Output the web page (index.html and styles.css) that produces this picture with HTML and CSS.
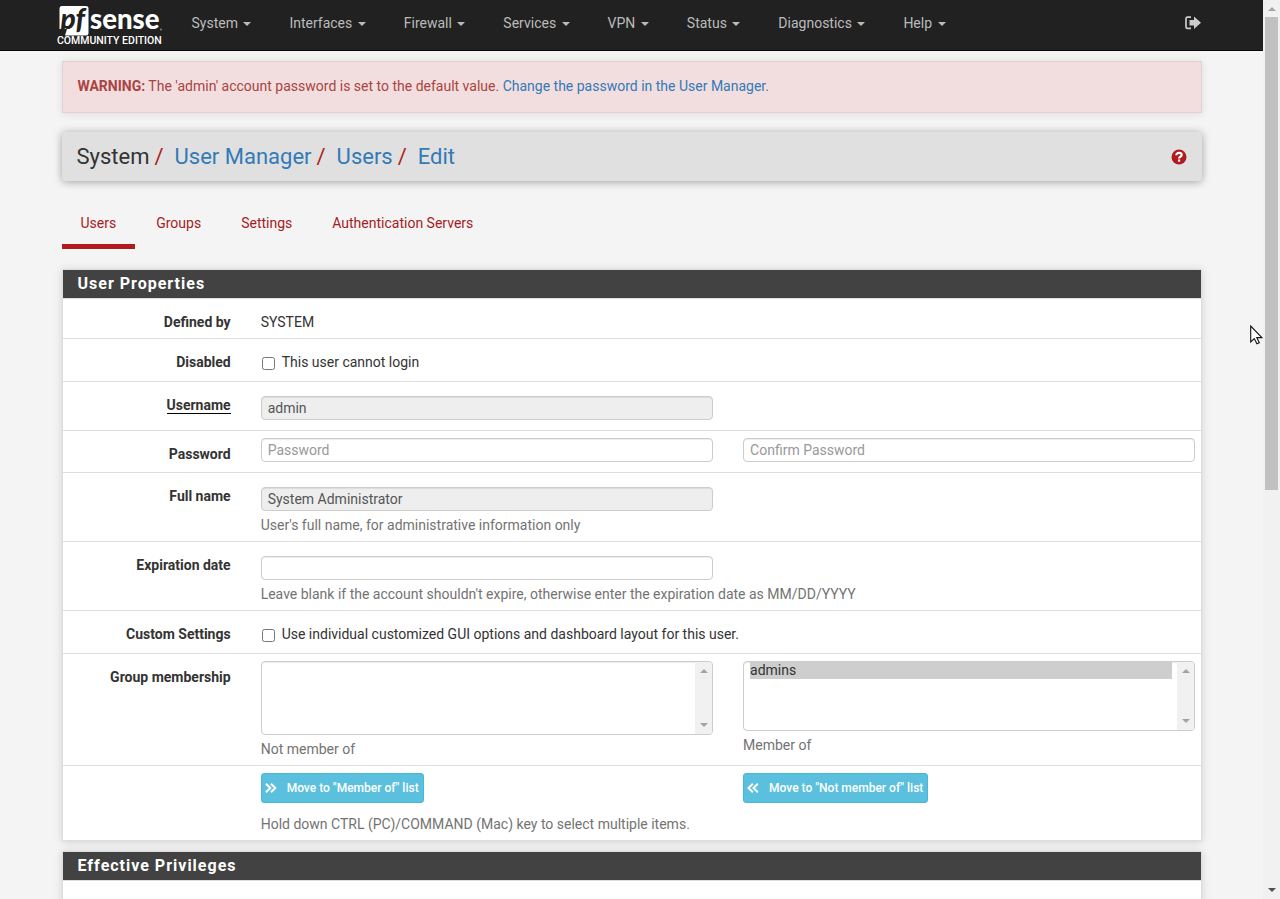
FILE: index.html
```html
<!DOCTYPE html>
<html lang="en">
<head>
<meta charset="utf-8">
<meta name="viewport" content="width=device-width, initial-scale=1">
<title>System: User Manager: Users: Edit</title>
<link rel="stylesheet" href="styles.css">
</head>
<body>
<header class="navbar">
  <div class="container navbar-inner">
    <a class="brand" href="#" aria-label="pfSense Community Edition">
      <svg class="brand-logo" viewBox="0 0 220 84" role="img" aria-hidden="true">
        <path class="logo-tile" d="M9 2h49q5 0 5 5v49q0 5-5 5H16l4-13H5V7q0-5 4-5z"/>
        <text class="logo-pf" x="7" y="48">pf</text>
        <text class="logo-sense" x="66" y="48">sense</text>
        <circle class="logo-dot" cx="208" cy="49" r="2"/>
        <text class="logo-sub" x="0" y="78">COMMUNITY EDITION</text>
      </svg>
    </a>
    <nav class="menu">
      <a href="#">System <span class="caret"></span></a>
      <a href="#">Interfaces <span class="caret"></span></a>
      <a href="#">Firewall <span class="caret"></span></a>
      <a href="#">Services <span class="caret"></span></a>
      <a href="#">VPN <span class="caret"></span></a>
      <a href="#">Status <span class="caret"></span></a>
      <a href="#">Diagnostics <span class="caret"></span></a>
      <a href="#">Help <span class="caret"></span></a>
    </nav>
    <a class="logout" href="#" aria-label="Logout">
      <svg width="17" height="14" viewBox="0 0 17 14"><path d="M6 1.200H2.500Q1 1.200 1 2.700v8.200Q1 12.400 2.500 12.400H6" fill="none" stroke="currentColor" stroke-width="1.700"/><path d="M4.500 4H9V.500L16 6.800 9 13.100V9.600H4.500z" fill="currentColor"/></svg>
    </a>
  </div>
</header>

<main class="container">
  <div class="alert"><strong>WARNING:</strong> The 'admin' account password is set to the default value. <a href="#">Change the password in the User Manager.</a></div>

  <div class="titlebar">
    <ol class="breadcrumb">
      <li>System</li>
      <li><a href="#">User Manager</a></li>
      <li><a href="#">Users</a></li>
      <li><a href="#">Edit</a></li>
    </ol>
    <a class="help-link" href="#" aria-label="Help">
      <svg width="16" height="16" viewBox="0 0 16 16"><circle cx="8" cy="8" r="7.500" fill="#b01c1e"/><path d="M5.300 6.300C5.300 4.700 6.400 3.900 8 3.900S10.700 4.800 10.700 6.100C10.700 7.600 8.100 7.700 8.100 9.400" fill="none" stroke="#fff" stroke-width="2.200"/><path d="M7 10.500h2.200v2.200H7z" fill="#fff"/></svg>
    </a>
  </div>

  <nav class="tabs">
    <a class="active" href="#">Users</a>
    <a href="#">Groups</a>
    <a href="#">Settings</a>
    <a href="#">Authentication Servers</a>
  </nav>

  <form class="form">
    <section class="panel">
      <h2 class="panel-heading">User Properties</h2>
      <div class="form-row">
        <span class="label">Defined by</span>
        <div class="field low">SYSTEM</div>
      </div>
      <div class="form-row">
        <span class="label">Disabled</span>
        <div class="field low wide check"><label><input type="checkbox"> This user cannot login</label></div>
      </div>
      <div class="form-row">
        <label class="label" for="username"><span class="required">Username</span></label>
        <div class="field inset"><input class="control" id="username" type="text" value="admin" readonly></div>
      </div>
      <div class="form-row">
        <label class="label" for="password">Password</label>
        <div class="field"><input class="control" id="password" type="password" placeholder="Password"></div>
        <div class="field"><input class="control" type="password" placeholder="Confirm Password" aria-label="Confirm Password"></div>
      </div>
      <div class="form-row">
        <label class="label" for="fullname">Full name</label>
        <div class="field inset"><input class="control" id="fullname" type="text" value="System Administrator" readonly><span class="hint">User's full name, for administrative information only</span></div>
      </div>
      <div class="form-row">
        <label class="label" for="expires">Expiration date</label>
        <div class="field inset wide"><input class="control half" id="expires" type="text"><span class="hint">Leave blank if the account shouldn't expire, otherwise enter the expiration date as MM/DD/YYYY</span></div>
      </div>
      <div class="form-row">
        <span class="label">Custom Settings</span>
        <div class="field low wide check"><label><input type="checkbox"> Use individual customized GUI options and dashboard layout for this user.</label></div>
      </div>
      <div class="form-row">
        <span class="label">Group membership</span>
        <div class="field">
          <div class="list">
            <select class="control listbox tall" id="notmember" multiple></select>
            <span class="list-scroll"><i class="arrow up"></i><i class="arrow down"></i></span>
          </div>
          <label class="hint" for="notmember">Not member of</label>
        </div>
        <div class="field">
          <div class="list">
            <select class="control listbox" id="member" multiple><option selected>admins</option></select>
            <span class="list-scroll"><i class="arrow up"></i><i class="arrow down"></i></span>
          </div>
          <label class="hint" for="member">Member of</label>
        </div>
      </div>
      <div class="form-row">
        <span class="label"></span>
        <div class="field">
          <button class="btn" type="button"><svg width="12" height="10" viewBox="0 0 12 10"><path d="M1 .700 5.300 5 1 9.300M6 .700 10.300 5 6 9.300"/></svg>Move to "Member of" list</button>
          <span class="hint after-button">Hold down CTRL (PC)/COMMAND (Mac) key to select multiple items.</span>
        </div>
        <div class="field">
          <button class="btn" type="button"><svg width="12" height="10" viewBox="0 0 12 10"><path d="M5.800 .700 1.500 5 5.800 9.300M10.800 .700 6.500 5 10.800 9.300"/></svg>Move to "Not member of" list</button>
        </div>
      </div>
    </section>

    <section class="panel">
      <h2 class="panel-heading">Effective Privileges</h2>
      <div class="panel-body"></div>
    </section>
  </form>
</main>

<div class="page-scroll"><i class="arrow up"></i><span class="thumb"></span><i class="arrow down dark"></i></div>
<svg class="pointer" width="13" height="20" viewBox="0 0 13 20"><path d="M.700 1v16l3.600-3.400 2.600 5.200 2.400-1.100-2.500-5.100h5.100z" fill="#fff" stroke="#111" stroke-width="1.100"/></svg>
</body>
</html>
```
FILE: styles.css
```css
* { box-sizing: border-box; }
html { height: 100%; overflow: hidden; }
body {
  margin: 0;
  height: 100%;
  padding-right: 17px;
  overflow: hidden;
  background: #f4f4f4;
  color: #333;
  font: 14px/20px Roboto, "Liberation Sans", sans-serif;
}
a { color: #337ab7; text-decoration: none; }
.container { max-width: 1170px; margin: 0 auto; padding: 0 15px; }

.navbar { background: #212121; border-bottom: 1px solid #080808; }
.navbar-inner { display: flex; height: 50px; }
.brand { margin-left: -5px; padding-top: 5px; width: 116px; }
.brand-logo { display: block; width: 110px; height: 42px; overflow: visible; }
.logo-tile { fill: #fff; }
.logo-pf { font: italic 900 56px Lato, sans-serif; fill: #212121; }
.logo-sense { font: 900 55px Lato, sans-serif; fill: #fff; }
.logo-dot { fill: #888; }
.logo-sub { font: 500 21px Roboto, sans-serif; fill: #fff; }
.menu { display: flex; flex: 1; }
.menu a { padding: 13px 19px 0; color: #bbb; white-space: nowrap; }
.caret {
  display: inline-block;
  margin-left: 2px;
  vertical-align: middle;
  border: 4px solid transparent;
  border-top-color: currentColor;
  border-bottom: 0;
}
.logout { padding-top: 16px; color: #ccc; }
.logout svg { display: block; }

.alert {
  margin: 10px 0 19px;
  padding: 14px 15px 16px;
  border: 1px solid #e6cfd2;
  background: #f2dede;
  color: #a94442;
  box-shadow: 0 1px 8px rgba(0, 0, 0, .1);
}
.titlebar {
  display: flex;
  align-items: center;
  justify-content: space-between;
  height: 49px;
  padding: 0 15px;
  border-radius: 4px;
  background: #e0e0e0;
  box-shadow: 0 1px 8px rgba(0, 0, 0, .35);
}
.breadcrumb { display: flex; margin: 0; padding: 0; list-style: none; font-size: 22px; line-height: 26px; }
.breadcrumb li + li::before { content: "/"; padding: 0 11px 0 5px; color: #b01c1e; }
.help-link svg { display: block; }

.tabs { display: flex; gap: 2px; margin: 22px 0 20px; }
.tabs a { padding: 10px 19px 11px; border-bottom: 5px solid transparent; color: #a51c24; }
.tabs .active { border-color: #b01c1e; }

.panel {
  margin-bottom: 10px;
  border: 1px solid #ddd;
  background: #fff;
  box-shadow: 0 1px 8px rgba(0, 0, 0, .15);
}
.panel-heading {
  margin: 0;
  padding: 4px 15px;
  border-bottom: 1px solid #ddd;
  background: #424242;
  background-clip: padding-box;
  color: #fff;
  font-size: 16px;
  font-weight: 700;
  line-height: 20px;
  letter-spacing: 1px;
}
.panel-body { min-height: 80px; }
.form-row {
  display: grid;
  grid-template-columns: minmax(0, 168fr) minmax(0, 452fr) minmax(0, 452fr);
  column-gap: 30px;
  padding: 7px 5px 6px 0;
  border-bottom: 1px solid #ddd;
}
.form-row:last-child { border-bottom: 0; }
.label { padding-top: 6px; text-align: right; font-weight: 700; }
.required { border-bottom: 1px solid #000; }
.field.inset { padding-top: 7px; }
.field.low { padding-top: 6px; }
.field.wide { grid-column: 2 / -1; }
.check { padding-bottom: 3px; }
.check label { display: flex; align-items: center; gap: 7px; }
.check input { width: 13px; height: 13px; margin: 2px 0 0 1px; }
.control {
  display: block;
  width: 100%;
  height: 24px;
  margin: 0 0 4px;
  padding: 0 6px;
  border: 1px solid #ccc;
  border-radius: 4px;
  outline: 0;
  background: #fff;
  box-shadow: inset 0 1px 1px rgba(0, 0, 0, .075);
  color: #555;
  font: inherit;
}
.control::placeholder { color: #999; opacity: 1; }
.control[readonly] { background: #eee; }
.half { width: calc((100% - 30px) / 2); }
.hint { display: block; color: #737373; white-space: nowrap; }
.list { position: relative; }
.listbox { height: 70px; padding: 0 22px 0 6px; overflow: hidden; }
.listbox.tall { height: 74px; }
.listbox option { min-height: 17px; padding: 0; background: #cecece; color: #333; line-height: 17px; }
.list-scroll {
  position: absolute;
  inset: 1px 1px 1px auto;
  display: flex;
  flex-direction: column;
  align-items: center;
  justify-content: space-between;
  width: 17px;
  padding: 7px 0;
  border-radius: 0 3px 3px 0;
  background: #f1f1f1;
}
.arrow { border: 4px solid transparent; color: #a3a3a3; }
.arrow.up { border-top: 0; border-bottom-color: currentColor; }
.arrow.down { border-bottom: 0; border-top-color: currentColor; }
.arrow.dark { color: #505050; }
.btn {
  display: flex;
  align-items: center;
  gap: 10px;
  height: 30px;
  padding: 0 4px 0 3px;
  border: 1px solid #46b8da;
  border-radius: 3px;
  background: #5bc0de;
  color: #fff;
  font: 500 12px/18px Roboto, "Liberation Sans", sans-serif;
  white-space: nowrap;
}
.btn svg { fill: none; stroke: #fff; stroke-width: 2; }
.after-button { margin-top: 11px; }

.page-scroll {
  position: fixed;
  inset: 0 0 0 auto;
  display: flex;
  flex-direction: column;
  align-items: center;
  width: 17px;
  padding: 7px 0;
  background: #f1f1f1;
}
.thumb { flex: 0 0 53.5%; width: 13px; margin: 6px 0 auto; background: #c1c1c1; }
.pointer { position: fixed; top: 325px; right: 17px; }
```
